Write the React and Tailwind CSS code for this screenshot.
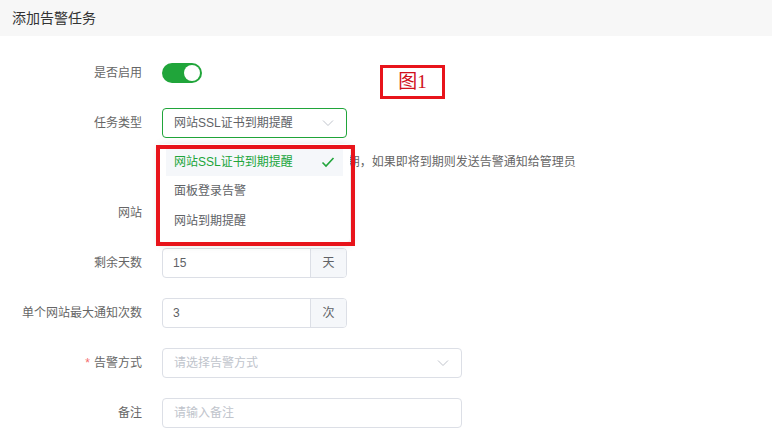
import React from 'react'

const font = { fontFamily: '"Liberation Sans", "Noto Sans CJK SC", sans-serif' }

function Chevron({ className = '' }) {
  return (
    <svg className={className} width="12" height="8" viewBox="0 0 12 8" fill="none">
      <path d="M1 1.5l5 5 5-5" stroke="#c0c4cc" strokeWidth="1" />
    </svg>
  )
}

function Row({ label, required, children, className = '' }) {
  return (
    <div className={`flex ${className}`}>
      <div className="w-[162px] shrink-0 pr-[20px] h-[30px] flex items-center justify-end text-[12px] text-[#666]">
        {required && <span className="text-[#f56c6c] mr-[4px]">*</span>}
        {label}
      </div>
      <div className="flex-1">{children}</div>
    </div>
  )
}

function InputGroup({ value, unit }) {
  return (
    <div className="w-[185px] h-[30px] flex border border-[#dcdfe6] rounded-[4px] overflow-hidden text-[12px] text-[#606266]">
      <div className="flex-1 px-[10px] flex items-center">{value}</div>
      <div className="w-[36px] bg-[#f5f7fa] border-l border-[#dcdfe6] flex items-center justify-center">{unit}</div>
    </div>
  )
}

export default function App() {
  return (
    <div className="w-[772px] h-[438px] bg-white relative overflow-hidden" style={font}>
      <div className="h-[36px] bg-[#f7f7f7] px-[12px] flex items-center text-[14px] text-[#333]">添加告警任务</div>

      <div className="pt-[22px]">
        <Row label="是否启用" className="mb-[20px]">
          <div className="h-[30px] flex items-center">
            <div className="w-[40px] h-[20px] rounded-full bg-[#20a53a] relative">
              <div className="absolute right-[2px] top-[2px] w-[16px] h-[16px] rounded-full bg-white" />
            </div>
          </div>
        </Row>

        <Row label="任务类型" className="mb-[26px]">
          <div className="w-[185px] h-[30px] border border-[#20a53a] rounded-[4px] flex items-center justify-between pl-[11px] pr-[12px] text-[12px] text-[#606266]">
            <span>网站SSL证书到期提醒</span>
            <Chevron />
          </div>
          <div className="mt-[14px] pl-[7px] h-[20px] leading-[20px] text-[12px] text-[#666] whitespace-nowrap">
            每天检测一次网站SSL证书到期日期，如果即将到期则发送告警通知给管理员
          </div>
        </Row>

        <Row label="网站" className="mb-[20px]">
          <div className="w-[185px] h-[30px] border border-[#dcdfe6] rounded-[4px]" />
        </Row>

        <Row label="剩余天数" className="mb-[20px]">
          <InputGroup value="15" unit="天" />
        </Row>

        <Row label="单个网站最大通知次数" className="mb-[20px]">
          <InputGroup value="3" unit="次" />
        </Row>

        <Row label="告警方式" required className="mb-[20px]">
          <div className="w-[300px] h-[30px] border border-[#dcdfe6] rounded-[4px] flex items-center justify-between pl-[11px] pr-[12px] text-[12px] text-[#c0c4cc]">
            <span>请选择告警方式</span>
            <Chevron />
          </div>
        </Row>

        <Row label="备注">
          <div className="w-[300px] h-[30px] border border-[#dcdfe6] rounded-[4px] flex items-center pl-[11px] text-[12px] text-[#c0c4cc]">
            请输入备注
          </div>
        </Row>
      </div>

      {/* dropdown */}
      <div className="absolute left-[159px] top-[144px] w-[191px] h-[98px] bg-white rounded-[4px] shadow-[0_2px_10px_rgba(0,0,0,0.15)] px-[7px] pt-[4px] text-[12px]">
        <div className="h-[28px] bg-[#f5f7fa] flex items-center justify-between px-[8px] text-[#20a53a]">
          <span>网站SSL证书到期提醒</span>
          <svg width="14" height="12" viewBox="0 0 14 12" fill="none">
            <path d="M1.5 6.5l3.5 3.5 7.5-8" stroke="#20a53a" strokeWidth="1.6" />
          </svg>
        </div>
        <div className="h-[30px] flex items-center px-[8px] text-[#606266]">面板登录告警</div>
        <div className="h-[30px] flex items-center px-[8px] text-[#606266]">网站到期提醒</div>
      </div>

      {/* annotations */}
      <div className="absolute left-[156px] top-[145px] w-[199px] h-[101px] border-4 border-[#e8141b]" />
      <div className="absolute left-[380px] top-[65px] w-[65px] h-[34px] border-[3px] border-[#e8141b] flex items-center justify-center text-[19px] text-[#d0101a]" style={{ fontFamily: '"Liberation Serif", "Noto Sans CJK SC", serif' }}>
        图1
      </div>
    </div>
  )
}
